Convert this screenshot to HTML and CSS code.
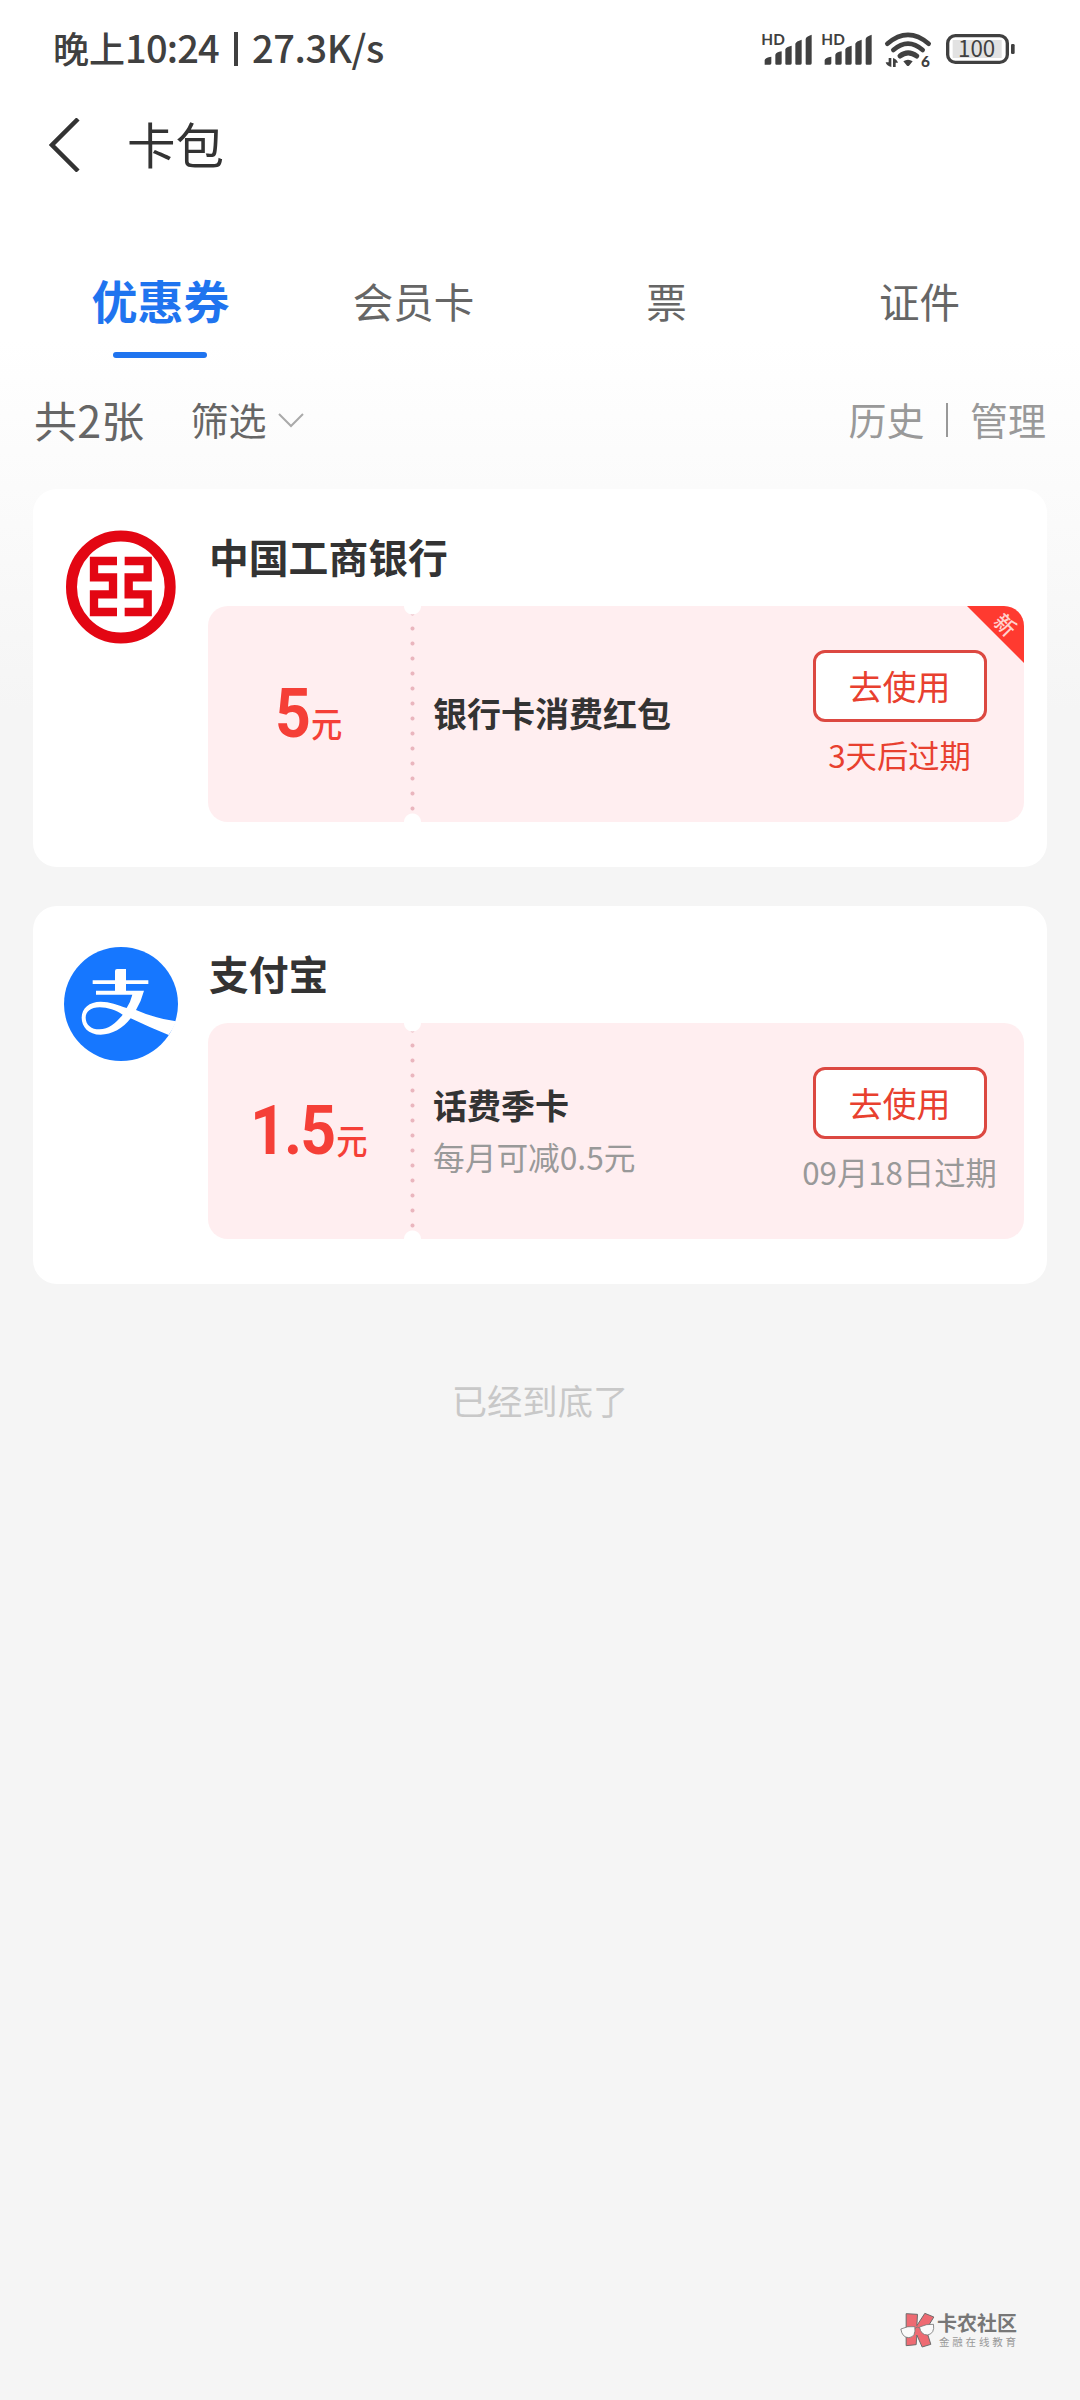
FILE: index.html
```html
<!DOCTYPE html>
<html lang="zh-CN">
<head>
<meta charset="utf-8">
<title>卡包</title>
<link rel="stylesheet" href="styles.css">
</head>
<body>
<div class="page">
  <header class="status">
    <div class="status-text"><span>晚上</span><span class="clock">10:24</span><i class="bar"></i><span class="speed">27.3K/s</span></div>
    <svg class="status-icons" viewBox="0 0 900 240" fill="#404040">
      <g id="sim">
        <text x="64" y="104" class="hd">HD</text>
        <path d="M74 164V150Q76 143 94 140V160Q94 164 90 164ZM106 161V134Q108 127 125 124V160Q125 164 121 164H109Q106 164 106 161ZM136 161V118Q138 111 155 107V160Q155 164 151 164H139Q136 164 136 161ZM166 161V101Q168 94 185 89V160Q185 164 181 164H169Q166 164 166 161ZM197 161V87Q198 79 215 74V160Q215 164 211 164H200Q197 164 197 161Z"/>
      </g>
      <use href="#sim" x="180"/>
      <g fill="none" stroke="#404040" stroke-width="14" stroke-linecap="round">
        <path d="M442 101Q504 48 566 101M460 120Q504 82 548 120"/>
        <path d="M480 138Q504 119 530 138" stroke-width="15"/>
      </g>
      <path d="M490 154Q504 144 518 154L507 167Q504 169 501 167ZM446 144H454V171Q440 168 437 157H446ZM459 171V144Q470 147 474 158H467V171Z"/>
      <text x="543" y="171" class="six">6</text>
      <rect x="638" y="90" width="147" height="54" fill="#e2e2e2"/>
      <rect x="623" y="77" width="179" height="80" rx="23" fill="none" stroke="#404040" stroke-width="10"/>
      <rect x="813" y="102" width="11" height="30" rx="4"/>
      <text x="710" y="142" text-anchor="middle" class="level">100</text>
    </svg>
  </header>

  <nav class="nav">
    <svg class="back" viewBox="0 0 32 54"><path d="M29 1L3 27L29 53" fill="none" stroke="#333" stroke-width="4.5"/></svg>
    <h1>卡包</h1>
  </nav>

  <div class="tabs">
    <div class="tab active">优惠券</div>
    <div class="tab">会员卡</div>
    <div class="tab">票</div>
    <div class="tab">证件</div>
  </div>

  <div class="filters">
    <span class="count">共2张</span>
    <span class="filter">筛选</span>
    <svg class="chevron" viewBox="0 0 26 15"><path d="M1 1L13 13L25 1" fill="none" stroke="#aaa" stroke-width="2"/></svg>
    <span class="action history">历史</span>
    <i class="divider"></i>
    <span class="action">管理</span>
  </div>

  <main class="cards">
    <section class="card">
      <svg class="logo" viewBox="102 149 342 342">
        <ellipse cx="272.5" cy="320" rx="148" ry="153" fill="none" stroke="#e30613" stroke-width="33"/>
        <path d="M261 242H192V291H249V342H192V395H261M284 242H353V291H296V342H353V395H284" fill="none" stroke="#e30613" stroke-width="25"/>
      </svg>
      <div class="content">
        <h2>中国工商银行</h2>
        <div class="coupon">
          <div class="amount"><b>5</b><span>元</span></div>
          <div class="info"><h3>银行卡消费红包</h3></div>
          <div class="use"><button>去使用</button><p class="soon">3天后过期</p></div>
          <div class="ribbon"><span>新</span></div>
        </div>
      </div>
    </section>

    <section class="card">
      <svg class="logo" viewBox="102 171 342 342">
        <circle cx="273" cy="342" r="171" fill="#1677ff"/>
        <path fill="#fff" fill-rule="evenodd" d="M255 243Q255 237 261 237H288V271H355V282H288V302H342Q334 333 318 360Q370 384 438 394Q432 415 416 435Q358 412 302 385C280 415 245 434 212 434C175 434 155 410 155 383C155 355 178 335 212 335C240 335 262 345 290 354Q302 335 307 314H198V302H255V282H188V271H255ZM278 374C258 361 233 352 209 352C182 352 167 365 167 383C167 405 185 418 208 418C238 418 260 397 278 374Z"/>
      </svg>
      <div class="content">
        <h2>支付宝</h2>
        <div class="coupon">
          <div class="amount"><b>1.5</b><span>元</span></div>
          <div class="info"><h3>话费季卡</h3><p>每月可减0.5元</p></div>
          <div class="use"><button>去使用</button><p>09月18日过期</p></div>
        </div>
      </div>
    </section>
  </main>

  <p class="end">已经到底了</p>

  <div class="brand">
    <svg class="brand-icon" viewBox="60 64 104 114">
      <g fill="#ee6a72" stroke="#6d6d6d" stroke-width="3" stroke-linejoin="round">
        <path d="M78 72L112 74L110 108L134 71L161 82L138 120L152 164L126 172L110 136L108 165L78 168Z"/>
      </g>
      <g fill="#fafafa" stroke="#777" stroke-width="2.5">
        <path d="M62 118Q82 108 104 111Q108 142 86 144Q66 144 62 118Z"/>
        <path d="M118 112Q140 102 160 104Q164 132 142 136Q122 136 118 112Z"/>
        <path d="M104 117Q111 108 118 115" fill="none"/>
      </g>
    </svg>
    <div><strong>卡农社区</strong><small>金融在线教育</small></div>
  </div>
</div>
</body>
</html>
```
FILE: styles.css
```css
* { box-sizing: border-box; margin: 0; padding: 0; }

body { font-family: "Noto Sans CJK SC", sans-serif; color: #333; }

.page {
  position: relative;
  width: 1080px;
  height: 2400px;
  background: linear-gradient(#fff 340px, #f5f5f5 710px);
}

.status {
  height: 97px;
  padding: 0 40px 0 53px;
  display: flex;
  justify-content: space-between;
  align-items: center;
}
.status-text {
  display: flex;
  align-items: center;
  margin-bottom: 3px;
  color: #404040;
  font-size: 36px;
  font-weight: 500;
  line-height: 54px;
  white-space: nowrap;
}
.clock, .speed { font-size: 38px; }
.clock { letter-spacing: -0.8px; }
.speed { letter-spacing: -0.4px; }
.bar { width: 4px; height: 34px; margin: 4px 14px 0 15px; background: #404040; }
.status-icons { width: 300px; height: 80px; flex: none; margin-top: 3px; }
.hd { font: 700 46px "Lato", sans-serif; }
.six { font: 900 46px "Lato", sans-serif; }
.level { font: 400 67px "Noto Sans CJK SC", sans-serif; }

.nav { height: 97px; padding-left: 49px; display: flex; align-items: center; }
.back { width: 32px; height: 54px; margin-bottom: 2px; }
.nav h1 { margin: 0 0 6px 46px; font-size: 48.5px; line-height: 72px; font-weight: 400; }

.tabs {
  height: 164px;
  padding: 48px 34px 0;
  display: grid;
  grid-template-columns: repeat(4, 1fr);
}
.tab {
  position: relative;
  height: 116px;
  text-align: center;
  font-size: 40.5px;
  line-height: 118px;
  color: #666;
}
.tab.active { font-size: 46px; line-height: 115px; font-weight: 700; color: #1f74ef; }
.tab.active::after {
  content: "";
  position: absolute;
  left: 79px;
  bottom: 0;
  width: 94px;
  height: 6px;
  border-radius: 3px;
  background: #1f74ef;
}

.filters {
  height: 131px;
  padding: 0 34px 9px 34px;
  display: flex;
  align-items: center;
  color: #666;
  font-size: 38px;
  line-height: 60px;
}
.count { font-size: 43px; letter-spacing: 0.2px; }
.filter { margin-left: 46px; }
.chevron { width: 26px; height: 15px; margin: 3px 0 0 12px; }
.action { color: #999; }
.history { margin-left: auto; }
.divider { width: 1.5px; height: 34px; margin: 2px 22px 0; background: #999; }

.cards { padding: 0 33px; display: flex; flex-direction: column; gap: 39px; }
.card {
  height: 378px;
  padding: 41px 23px 0 31px;
  border-radius: 24px;
  background: #fff;
  display: flex;
  gap: 30px;
}
.logo { width: 114px; height: 114px; flex: none; }
.content { flex: 1; }
.content h2 { height: 76px; font-size: 39.8px; line-height: 52px; font-weight: 700; padding-left: 1px; }

.coupon {
  position: relative;
  height: 216px;
  border-radius: 20px;
  overflow: hidden;
  display: flex;
  background:
    radial-gradient(circle at 204.5px 0, #fff 8px, transparent 9px),
    radial-gradient(circle at 204.5px 216px, #fff 8px, transparent 9px),
    radial-gradient(circle at 2.5px 7.5px, #eab6be 1.6px, transparent 2.4px) 202px 15px / 5px 15px repeat-y content-box,
    #ffeef0;
}
.amount {
  width: 205px;
  padding-right: 4px;
  display: flex;
  justify-content: center;
  align-items: baseline;
  color: #f53f37;
  line-height: 216px;
  transform: scaleX(0.92);
}
.amount b { font: 700 68px/217px "Roboto", sans-serif; letter-spacing: -2px; }
.amount span { font-size: 34px; font-weight: 500; margin-left: 2px; }
.info { flex: 1; padding-left: 20px; display: flex; flex-direction: column; justify-content: center; }
.info h3 { font-size: 34px; line-height: 52px; font-weight: 700; margin-top: -2px; }
.info p { font-size: 31.7px; line-height: 50px; color: #999; white-space: nowrap; }
.use { width: 249px; padding-top: 44px; display: flex; flex-direction: column; align-items: center; }
.use button {
  width: 174px;
  height: 72px;
  border: 3px solid #dc4841;
  border-radius: 12px;
  background: #fff;
  color: #e8402f;
  font: 34px/66px "Noto Sans CJK SC", sans-serif;
}
.use p { margin-top: 8px; font-size: 31.3px; line-height: 50px; color: #999; white-space: nowrap; }
.use .soon { color: #e8402f; }
.ribbon {
  position: absolute;
  top: 0;
  right: 0;
  width: 57px;
  height: 57px;
  background: #ff3a30;
  clip-path: polygon(0 0, 100% 0, 100% 100%);
}
.ribbon span {
  position: absolute;
  left: 28px;
  top: 7px;
  width: 22px;
  font-size: 21px;
  font-weight: 500;
  line-height: 22px;
  text-align: center;
  color: #ffd2ce;
  transform: rotate(45deg);
}

.end { margin-top: 90px; text-align: center; font-size: 35.3px; line-height: 52px; color: #c8c8c8; }

.brand { position: absolute; left: 900px; top: 2311px; display: flex; gap: 2px; }
.brand-icon { width: 35px; height: 38px; }
.brand strong, .brand small { display: block; white-space: nowrap; }
.brand strong { font-size: 20px; line-height: 24px; font-weight: 700; color: #777; }
.brand small { margin-left: 2px; font-size: 10.5px; line-height: 13px; letter-spacing: 2.8px; color: #999; }
```
